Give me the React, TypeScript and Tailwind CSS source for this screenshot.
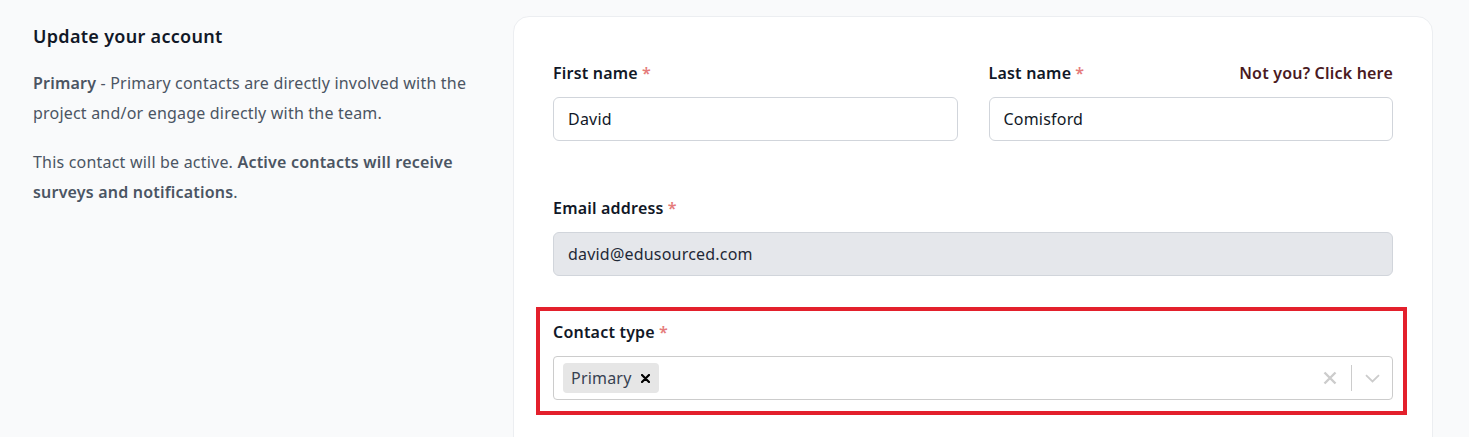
function Req() {
  return <span className="ml-1 text-[#e57b7b]">*</span>;
}

function Label({ children, right }: { children: React.ReactNode; right?: React.ReactNode }) {
  return (
    <div className="mb-3 flex h-6 items-center justify-between">
      <label className="text-base font-semibold leading-6 text-[#111827]">
        {children}
        <Req />
      </label>
      {right}
    </div>
  );
}

export default function App() {
  return (
    <div
      className="flex min-h-[437px] gap-10 overflow-hidden bg-[#f9fafb] pl-[33px] pr-9 pt-4 tracking-[0.2px]"
      style={{ fontFamily: '"Noto Sans", "Open Sans", sans-serif' }}
    >
      <section className="w-[440px] shrink-0 pt-[8px]">
        <h2 className="text-lg font-semibold leading-6 tracking-[0.3px] text-[#111827]">Update your account</h2>
        <p className="mt-[20px] text-base leading-[30px] text-[#4b5563]">
          <span className="font-semibold">Primary</span> - Primary contacts are directly involved with the
          project and/or engage directly with the team.
        </p>
        <p className="mt-[19px] text-base leading-[30px] text-[#4b5563]">
          This contact will be active.{" "}
          <span className="font-semibold">Active contacts will receive surveys and notifications</span>.
        </p>
      </section>

      <main className="h-[460px] flex-1 rounded-2xl border border-[#eceef1] bg-white px-[39px] pt-[44px]">
        <div className="grid grid-cols-2 gap-[31px]">
          <div>
            <Label>First name</Label>
            <input
              readOnly
              value="David"
              className="h-11 w-full rounded-md border border-[#d1d5db] px-[14px] text-base text-[#111827] outline-none"
            />
          </div>
          <div>
            <Label
              right={
                <a className="text-base font-semibold text-[#4a1a1f]" href="#">
                  Not you? Click here
                </a>
              }
            >
              Last name
            </Label>
            <input
              readOnly
              value="Comisford"
              className="h-11 w-full rounded-md border border-[#d1d5db] px-[14px] text-base text-[#111827] outline-none"
            />
          </div>
        </div>

        <div className="mt-[55px]">
          <Label>Email address</Label>
          <input
            readOnly
            value="david@edusourced.com"
            className="h-11 w-full rounded-md border border-[#d1d5db] bg-[#e5e7eb] px-[14px] text-base text-[#1f2937] outline-none"
          />
        </div>

        <div className="-ml-[17px] -mr-[14px] mt-[31px] border-4 border-[#e3202c] pb-[11px] pl-[13px] pr-[10px] pt-[9px]">
          <Label>Contact type</Label>
          <div className="flex h-11 items-center rounded-[4px] border border-[#cccccc] pl-[9px]">
            <div className="flex flex-1 items-center">
              <span className="flex h-[30px] items-center rounded-sm bg-[#e6e6e6] pl-[8px] pr-[9px] text-base text-[#374151]">
                Primary
                <svg width="9" height="9" viewBox="0 0 9 9" className="ml-[9px]">
                  <path d="M1 1L8 8M8 1L1 8" stroke="#000" strokeWidth="2.2" strokeLinecap="round" />
                </svg>
              </span>
            </div>
            <div className="flex items-center">
              <span className="flex w-[42px] justify-center">
                <svg width="14" height="14" viewBox="0 0 14 14">
                  <path d="M1.5 1.5L12.5 12.5M12.5 1.5L1.5 12.5" stroke="#cccccc" strokeWidth="2.4" />
                </svg>
              </span>
              <span className="h-[26px] w-px bg-[#cccccc]" />
              <span className="flex w-[40px] justify-center">
                <svg width="15" height="9" viewBox="0 0 15 9">
                  <path d="M1 1.2L7.5 7.5L14 1.2" fill="none" stroke="#cccccc" strokeWidth="1.8" />
                </svg>
              </span>
            </div>
          </div>
        </div>
      </main>
    </div>
  );
}
